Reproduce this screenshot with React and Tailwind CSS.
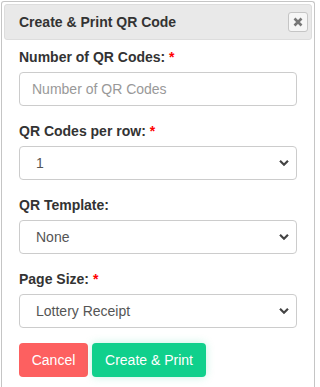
import React from "react";

function Chevron() {
  return (
    <svg width="10" height="7" viewBox="0 0 10 7" className="pointer-events-none absolute right-[5px] top-1/2 -translate-y-1/2">
      <path d="M1 1.2 L5 5.2 L9 1.2" fill="none" stroke="#444" strokeWidth="2.2" />
    </svg>
  );
}

function Label({ children, req }) {
  return (
    <div className="h-5 text-[14px] leading-5 font-bold text-[#333]">
      {children}
      {req && <span className="text-[#f00]"> *</span>}
    </div>
  );
}

function Select({ value }) {
  return (
    <div className="relative mt-[5px] h-[34px] w-[278px] rounded-[4px] border border-[#ccc] bg-white">
      <div className="pl-[16px] text-[14px] leading-[32px] text-[#555]">{value}</div>
      <div className="absolute right-[2px] top-0 h-full w-[14px]">
        <Chevron />
      </div>
    </div>
  );
}

export default function App() {
  return (
    <div className="h-[387px] w-[316px] overflow-hidden bg-white" style={{ fontFamily: '"Liberation Sans", Arial, sans-serif' }}>
      <div className="ml-[1px] mt-[1px] h-[386px] w-[314px] rounded-t-[3px] border border-b-0 border-[#c5c5c5] bg-white px-[2px] pt-[2px]">
        <div className="flex h-[36px] items-center justify-between rounded-[3px] border border-[#dddddd] bg-[#e9e9e9] pl-[14px] pr-[3px]">
          <div className="text-[14px] font-bold text-[#333]">Create &amp; Print QR Code</div>
          <div className="flex h-[20px] w-[20px] items-center justify-center rounded-[3px] border border-[#c5c5c5] bg-[#f6f6f6]">
            <svg width="10" height="10" viewBox="0 0 10 10">
              <path d="M1.5 1.5 L8.5 8.5 M8.5 1.5 L1.5 8.5" stroke="#777" strokeWidth="2.6" />
            </svg>
          </div>
        </div>
        <div className="flex flex-col pl-[15px] pt-[7px]">
          <Label req>Number of QR Codes:</Label>
          <div className="mt-[5px] flex h-[34px] w-[278px] items-center rounded-[4px] border border-[#ccc] bg-white pl-[12px] text-[14px] text-[#999]">
            Number of QR Codes
          </div>
          <div className="mt-[15px]">
            <Label req>QR Codes per row:</Label>
          </div>
          <Select value="1" />
          <div className="mt-[15px]">
            <Label>QR Template:</Label>
          </div>
          <Select value="None" />
          <div className="mt-[15px]">
            <Label req>Page Size:</Label>
          </div>
          <Select value="Lottery Receipt" />
          <div className="mt-[15px] flex gap-[4px]">
            <div className="flex h-[34px] w-[69px] items-center justify-center rounded-[4px] bg-[#fd6060] text-[14px] text-white">
              Cancel
            </div>
            <div className="flex h-[34px] w-[114px] items-center justify-center rounded-[4px] bg-[#10d08c] text-[14px] text-white shadow-[0_0_8px_rgba(16,208,140,0.25)]">
              Create &amp; Print
            </div>
          </div>
        </div>
      </div>
    </div>
  );
}
